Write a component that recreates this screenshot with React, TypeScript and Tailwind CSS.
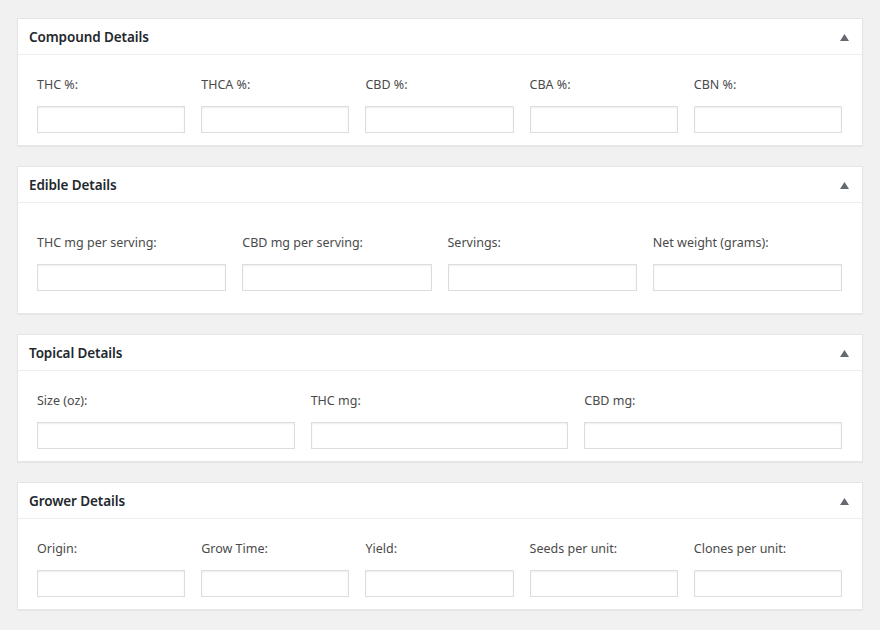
import React from "react";

type Box = { title: string; fields: string[]; cols: string; pt: string; pb: string };

const boxes: Box[] = [
  { title: "Compound Details", fields: ["THC %:", "THCA %:", "CBD %:", "CBA %:", "CBN %:"], cols: "grid-cols-5", pt: "pt-[20px]", pb: "pb-[12px]" },
  { title: "Edible Details", fields: ["THC mg per serving:", "CBD mg per serving:", "Servings:", "Net weight (grams):"], cols: "grid-cols-4", pt: "pt-[30px]", pb: "pb-[22px]" },
  { title: "Topical Details", fields: ["Size (oz):", "THC mg:", "CBD mg:"], cols: "grid-cols-3", pt: "pt-[20px]", pb: "pb-[12px]" },
  { title: "Grower Details", fields: ["Origin:", "Grow Time:", "Yield:", "Seeds per unit:", "Clones per unit:"], cols: "grid-cols-5", pt: "pt-[20px]", pb: "pb-[12px]" },
];

export default function App() {
  return (
    <div className="min-h-[630px] w-[880px] bg-[#f1f1f1] px-[17px] pt-[18px] pb-[20px] flex flex-col gap-[20px]" style={{ fontFamily: '"Noto Sans", "Open Sans", sans-serif' }}>
      {boxes.map((b) => (
        <div key={b.title} className="bg-white border border-[#e5e5e5] shadow-[0_1px_1px_rgba(0,0,0,0.04)]">
          <div className="h-[36px] border-b border-[#eeeeee] flex items-center justify-between pl-[11px] pr-[13px]">
            <span className="text-[13.5px] font-semibold text-[#23282d] tracking-[-0.1px] mt-[1px]">{b.title}</span>
            <svg width="9" height="7" viewBox="0 0 9 7" className="mt-[1px]">
              <polygon points="4.5,0 9,7 0,7" fill="#646970" />
            </svg>
          </div>
          <div className={`px-[19px] pr-[20px] ${b.pt} ${b.pb} grid ${b.cols} gap-x-[16px]`}>
            {b.fields.map((f) => (
              <div key={f} className="flex flex-col gap-[12px]">
                <label className="text-[12.5px] leading-[19px] text-[#4a4a4a]">{f}</label>
                <input className="h-[27px] w-full border border-[#dddddd] shadow-[inset_0_1px_2px_rgba(0,0,0,0.07)] bg-white outline-none" />
              </div>
            ))}
          </div>
        </div>
      ))}
    </div>
  );
}
